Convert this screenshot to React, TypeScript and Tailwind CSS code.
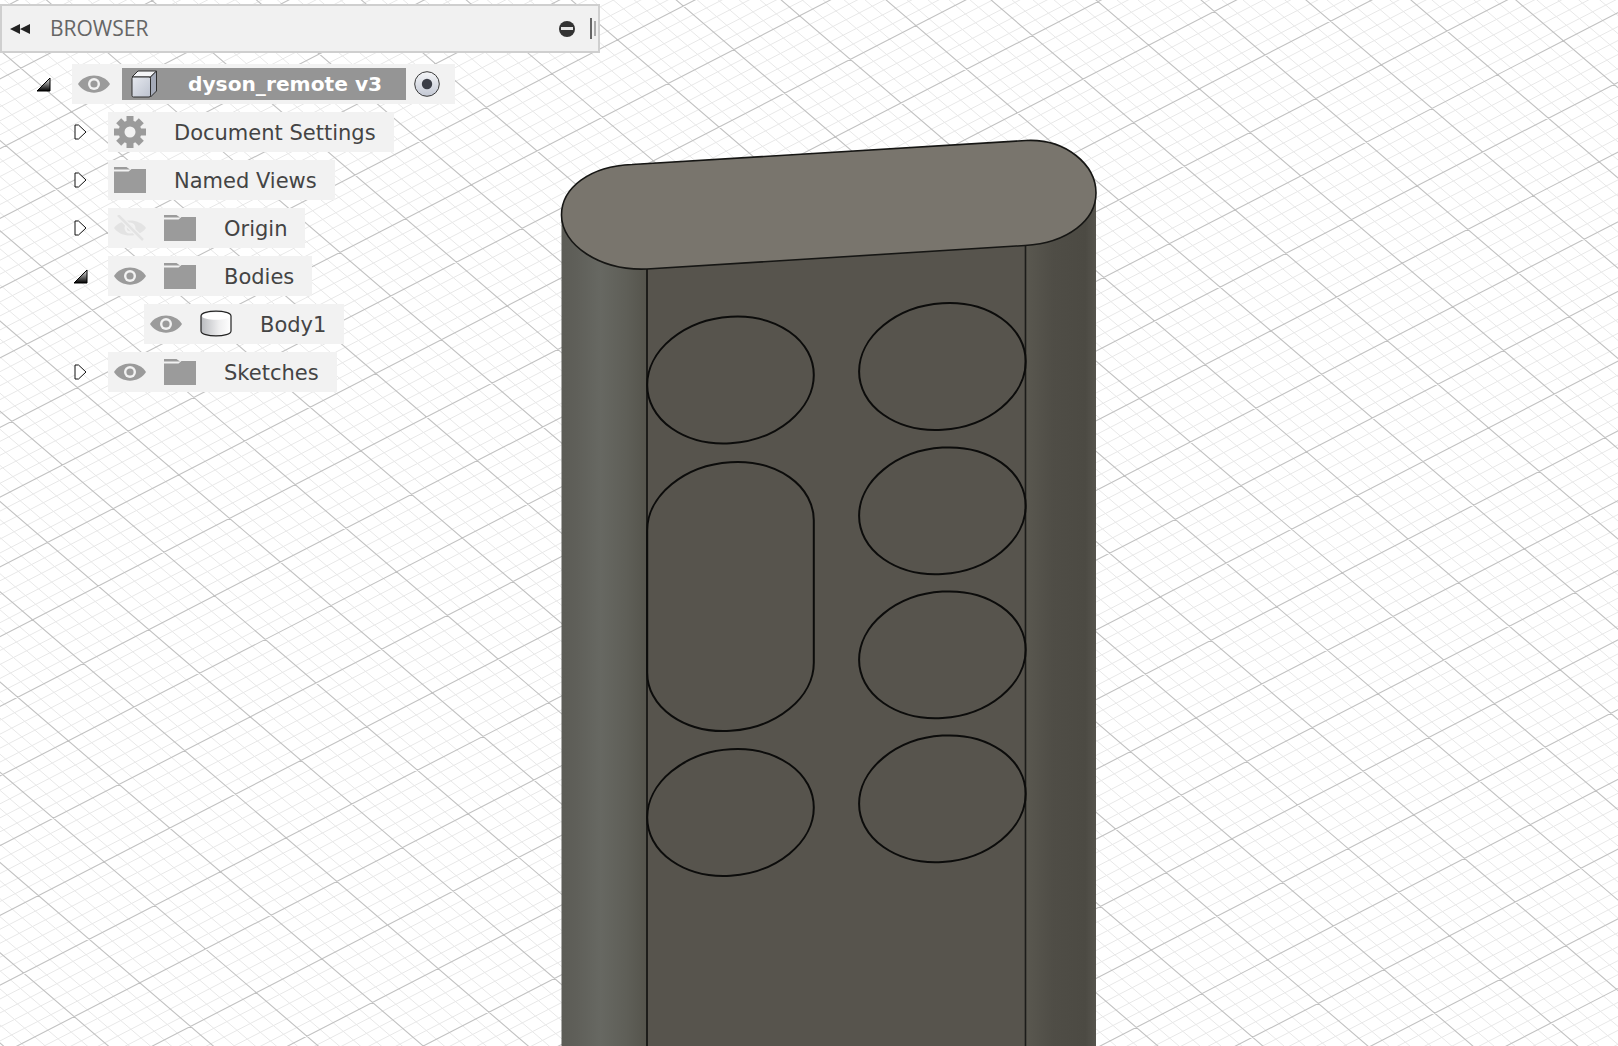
import type { ReactNode } from "react";
import { clsx } from "clsx";

// construction plane grid, 5 minor cells per major cell
const ORIGIN = { x: 1265, y: 55 };
const STEP_A = { x: 50.7, y: 43.6 };
const STEP_B = { x: 65.65, y: -33.8 };

function buildGrid(minor: boolean) {
  let d = "";
  const add = (u: number, v: number, dx: number, dy: number) => {
    const px = ORIGIN.x + u * STEP_A.x + v * STEP_B.x;
    const py = ORIGIN.y + u * STEP_A.y + v * STEP_B.y;
    d += `M${(px - dx * 60).toFixed(1)} ${(py - dy * 60).toFixed(1)}L${(px + dx * 60).toFixed(1)} ${(py + dy * 60).toFixed(1)}`;
  };
  for (let n = -200; n <= 250; n++) {
    if (n % 5 === 0 === minor) continue;
    add(n / 5, 0, STEP_B.x, STEP_B.y);
  }
  for (let n = -250; n <= 150; n++) {
    if (n % 5 === 0 === minor) continue;
    add(0, n / 5, STEP_A.x, STEP_A.y);
  }
  return d;
}

const LEFT_ELLIPSES = [380, 812.5];
const RIGHT_ELLIPSES = [366.5, 510.8, 654.8, 798.8];

function Viewport() {
  return (
    <svg className="absolute inset-0 blur-[0.4px]" width="1618" height="1046" viewBox="0 0 1618 1046">
      <defs>
        <linearGradient id="leftSide" x1="0" x2="1" y1="0" y2="0">
          <stop offset="0" stopColor="#5c5c56" />
          <stop offset="0.16" stopColor="#5f5f59" />
          <stop offset="0.45" stopColor="#676862" />
          <stop offset="0.75" stopColor="#5f5f58" />
          <stop offset="1" stopColor="#55544c" />
        </linearGradient>
        <linearGradient id="rightSide" x1="0" x2="1" y1="0" y2="0">
          <stop offset="0" stopColor="#5a5850" />
          <stop offset="0.4" stopColor="#4f4d46" />
          <stop offset="0.85" stopColor="#4c4a43" />
          <stop offset="1" stopColor="#57554e" />
        </linearGradient>
      </defs>

      <path d={buildGrid(true)} stroke="#e8e8e8" strokeWidth="1" fill="none" />
      <path d={buildGrid(false)} stroke="#c2c2c2" strokeWidth="1.1" fill="none" />

      {/* body */}
      <rect x="561.5" y="210" width="86" height="836" fill="url(#leftSide)" />
      <rect x="647" y="240" width="378" height="806" fill="#57544d" />
      <rect x="1025" y="190" width="71" height="856" fill="url(#rightSide)" />
      <line x1="647" y1="268" x2="647" y2="1046" stroke="#0f0f0e" strokeWidth="1.6" />
      <line x1="1025.5" y1="245" x2="1025.5" y2="1046" stroke="#1c1c1a" strokeWidth="1.6" />

      {/* top cap */}
      <path
        d="M632 164.5L1026 140.5C1066 138.5 1096 165 1096 193C1096 220 1068 243 1025 245.5L647 269C600 271 561.5 245 561.5 215C561.5 188 590 166 632 164.5Z"
        fill="#79756d"
        stroke="#161614"
        strokeWidth="1.6"
      />

      {/* buttons */}
      {LEFT_ELLIPSES.map((cy) => (
        <circle
          key={cy}
          r="1"
          transform={`matrix(83.3 -5 0 63.2 730.5 ${cy})`}
          fill="none"
          stroke="#0c0c0b"
          strokeWidth="2"
          vectorEffect="non-scaling-stroke"
        />
      ))}
      {RIGHT_ELLIPSES.map((cy) => (
        <circle
          key={cy}
          r="1"
          transform={`matrix(83.3 -5 0 63.2 942.4 ${cy})`}
          fill="none"
          stroke="#0c0c0b"
          strokeWidth="2"
          vectorEffect="non-scaling-stroke"
        />
      ))}
      <path
        d="M-1 -1.126A1 1 0 0 1 1 -1.126L1 1.126A1 1 0 0 1 -1 1.126Z"
        transform="matrix(83.3 -5 0 63.2 730.5 596.5)"
        fill="none"
        stroke="#0c0c0b"
        strokeWidth="2"
        vectorEffect="non-scaling-stroke"
      />
    </svg>
  );
}

function EyeIcon({ off }: { off?: boolean }) {
  if (off) {
    return (
      <svg width="32" height="26" viewBox="0 0 32 26" className="shrink-0">
        <path d="M0 13C7 3 25 3 32 13C25 23 7 23 0 13Z" fill="#e3e3e3" />
        <circle cx="16" cy="13" r="5.5" fill="#f2f2f2" />
        <circle cx="16" cy="13" r="3.2" fill="#e3e3e3" />
        <line x1="4" y1="0" x2="29" y2="25" stroke="#f2f2f2" strokeWidth="5" />
        <line x1="4" y1="0" x2="29" y2="25" stroke="#e3e3e3" strokeWidth="2.5" />
      </svg>
    );
  }
  return (
    <svg width="32" height="20" viewBox="0 0 32 20" className="shrink-0">
      <path d="M0 10C7 -1.5 25 -1.5 32 10C25 21.5 7 21.5 0 10Z" fill="#9b9b9b" />
      <circle cx="16" cy="10" r="6" fill="#f2f2f2" />
      <circle cx="16" cy="10" r="3.6" fill="#9b9b9b" />
    </svg>
  );
}

function FolderIcon() {
  return (
    <svg width="32" height="26" viewBox="0 0 32 26" className="shrink-0">
      <path d="M0 0H12.5L16 2.6H0Z" fill="#9b9b9b" />
      <path d="M0 4.5H14.5L17.5 2H32V26H0Z" fill="#9b9b9b" />
    </svg>
  );
}

function GearIcon() {
  return (
    <svg width="32" height="32" viewBox="0 0 32 32" className="shrink-0">
      {[0, 45, 90, 135].map((deg) => (
        <rect key={deg} x="12.5" y="0" width="7" height="32" fill="#9b9b9b" transform={`rotate(${deg} 16 16)`} />
      ))}
      <circle cx="16" cy="16" r="11.5" fill="#9b9b9b" />
      <circle cx="16" cy="16" r="5.5" fill="#f2f2f2" />
    </svg>
  );
}

function CubeIcon() {
  return (
    <svg width="27" height="28" viewBox="0 0 27 28" className="shrink-0">
      <defs>
        <linearGradient id="cubeFront" x1="0" x2="1" y1="0" y2="1">
          <stop offset="0" stopColor="#e6e9ef" />
          <stop offset="1" stopColor="#bcc2cf" />
        </linearGradient>
      </defs>
      <path d="M1 7L7 1H25.5L19.5 7Z" fill="#f4f5f7" stroke="#2e2e2e" strokeLinejoin="round" />
      <path d="M19.5 7L25.5 1V21L19.5 27Z" fill="#a4aab8" stroke="#2e2e2e" strokeLinejoin="round" />
      <rect x="1" y="7" width="18.5" height="20" rx="1.5" fill="url(#cubeFront)" stroke="#2e2e2e" />
    </svg>
  );
}

function CylinderIcon() {
  return (
    <svg width="32" height="28" viewBox="0 0 32 28" className="shrink-0">
      <defs>
        <linearGradient id="cylSide" x1="0" x2="1" y1="0" y2="0">
          <stop offset="0" stopColor="#b9bbbf" />
          <stop offset="0.6" stopColor="#eeeeef" />
          <stop offset="1" stopColor="#ffffff" />
        </linearGradient>
      </defs>
      <path d="M1 6C1 -0.5 31 -0.5 31 6V21C31 27.5 1 27.5 1 21Z" fill="url(#cylSide)" stroke="#222" strokeWidth="1.2" />
      <path d="M2 6C2 11 30 11 30 6C30 1 2 1 2 6Z" fill="#ffffff" />
    </svg>
  );
}

function RadioIcon() {
  return (
    <svg width="26" height="26" viewBox="0 0 26 26" className="shrink-0">
      <defs>
        <linearGradient id="radioFill" x1="0" x2="0" y1="0" y2="1">
          <stop offset="0" stopColor="#f5f6f8" />
          <stop offset="1" stopColor="#c3c8d4" />
        </linearGradient>
      </defs>
      <circle cx="13" cy="13" r="12.3" fill="url(#radioFill)" stroke="#3a3a3a" />
      <circle cx="13" cy="13" r="5.2" fill="#3b3e47" />
    </svg>
  );
}

function ClosedArrow() {
  return (
    <svg width="13" height="16" viewBox="0 0 13 16" className="shrink-0">
      <path d="M1 1H4.5L12 8L4.5 15H1Z" fill="#ffffff" stroke="#111" strokeLinejoin="round" />
    </svg>
  );
}

function OpenArrow({ id }: { id: string }) {
  return (
    <svg width="15" height="15" viewBox="0 0 15 15" className="-ml-px shrink-0">
      <defs>
        <linearGradient id={id} x1="0" x2="0" y1="0" y2="1">
          <stop offset="0" stopColor="#e8e8e8" />
          <stop offset="1" stopColor="#000" />
        </linearGradient>
      </defs>
      <path d="M1 14L14 1V14Z" fill={`url(#${id})`} stroke="#000" strokeLinejoin="round" />
    </svg>
  );
}

interface TreeRowProps {
  offset: string;
  arrow?: ReactNode;
  children: ReactNode;
  label: string;
}

function TreeRow({ offset, arrow, children, label }: TreeRowProps) {
  return (
    <div className={clsx("flex h-10 items-center", offset)}>
      {arrow && <div className="flex w-[34px] shrink-0 items-center">{arrow}</div>}
      <div className="flex h-10 items-center bg-[#f2f2f2] pl-[6px] pr-[18px]">
        {children}
        <span className="ml-[28px] whitespace-nowrap pt-[4px] text-[21px] text-[#444]">{label}</span>
      </div>
    </div>
  );
}

export default function App() {
  return (
    <div className="relative h-[1046px] w-[1618px] overflow-hidden bg-white font-['DejaVu_Sans',sans-serif]">
      <Viewport />

      <div className="absolute left-0 top-[4px] w-[600px]">
        {/* Header */}
        <div className="flex h-[49px] items-center border-2 border-[#cfcfcf] bg-[#f1f1f1] pl-[8px]">
          <svg width="20" height="10" viewBox="0 0 20 10" className="shrink-0">
            <path d="M10 0V10L0 5ZM20 0V10L10 5Z" fill="#222" />
          </svg>
          <span className="ml-[20px] font-['Open_Sans',sans-serif] text-[21px] text-[#666]">BROWSER</span>
          <div className="ml-auto flex items-center">
            <div className="flex h-4 w-4 items-center justify-center rounded-full bg-[#333]">
              <div className="h-[3px] w-[12px] bg-[#e6e6e6]" />
            </div>
            <div className="ml-[15px] h-[21px] w-[2px] bg-[#666]" />
            <div className="ml-[2px] h-[15px] w-[2px] bg-[#aaa]" />
            <div className="w-[2px]" />
          </div>
        </div>

        {/* Tree */}
        <div className="mt-[11px] flex flex-col gap-2">
          <div className="ml-[37px] flex h-10 items-center">
            <div className="flex w-[35px] shrink-0 items-center">
              <OpenArrow id="rootArrow" />
            </div>
            <div className="flex h-10 items-center bg-[#f2f2f2] pl-[6px] pr-[15px]">
              <EyeIcon />
              <div className="ml-[12px] flex h-8 items-center bg-[#959595] pl-[9px] pr-[24px]">
                <CubeIcon />
                <span className="ml-[30px] whitespace-nowrap text-[20.2px] font-bold text-white">dyson_remote v3</span>
              </div>
              <div className="ml-[8px]">
                <RadioIcon />
              </div>
            </div>
          </div>

          <TreeRow offset="ml-[74px]" arrow={<ClosedArrow />} label="Document Settings">
            <GearIcon />
          </TreeRow>
          <TreeRow offset="ml-[74px]" arrow={<ClosedArrow />} label="Named Views">
            <FolderIcon />
          </TreeRow>
          <TreeRow offset="ml-[74px]" arrow={<ClosedArrow />} label="Origin">
            <EyeIcon off />
            <div className="ml-[18px]">
              <FolderIcon />
            </div>
          </TreeRow>
          <TreeRow offset="ml-[74px]" arrow={<OpenArrow id="bodiesArrow" />} label="Bodies">
            <EyeIcon />
            <div className="ml-[18px]">
              <FolderIcon />
            </div>
          </TreeRow>
          <TreeRow offset="ml-[144px]" label="Body1">
            <EyeIcon />
            <div className="ml-[18px]">
              <CylinderIcon />
            </div>
          </TreeRow>
          <TreeRow offset="ml-[74px]" arrow={<ClosedArrow />} label="Sketches">
            <EyeIcon />
            <div className="ml-[18px]">
              <FolderIcon />
            </div>
          </TreeRow>
        </div>
      </div>
    </div>
  );
}
